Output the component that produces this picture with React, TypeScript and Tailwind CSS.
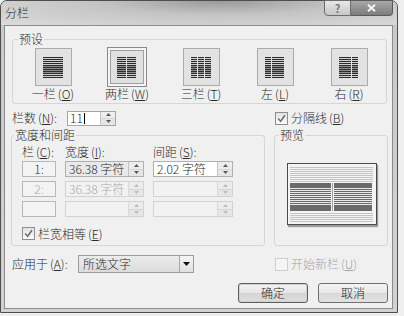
import React from "react";

const ink = "text-[#2a2a2a]";

function Key({ c }: { c: string }) {
  return (
    <span className="ml-[2px]">
      (<span className="underline underline-offset-[1px]">{c}</span>)
    </span>
  );
}

function Cols({ spans }: { spans: [number, number][] }) {
  const ys = Array.from({ length: 11 }, (_, i) => i * 2);
  return (
    <svg width="21" height="21" viewBox="0 0 21 21">
      {spans.map(([a, b]) => (
        <g key={a}>
          <rect x={a} y={9} width={b - a} height={8} fill="#9a9a9a" />
          {ys.map((y) => (
            <rect key={y} x={a} y={y} width={b - a} height={1.1} fill="#2c2c2c" />
          ))}
        </g>
      ))}
    </svg>
  );
}

function Preset({ label, k, spans, sel }: { label: string; k: string; spans: [number, number][]; sel?: boolean }) {
  return (
    <div className="flex w-[74px] flex-col items-center">
      <div className="flex h-[40px] w-[40px] items-center justify-center">
        {sel ? (
          <div className="flex h-[40px] w-[40px] items-center justify-center border border-[#8a8a8a] bg-[#f4f4f4]">
            <div className="flex h-[34px] w-[34px] items-center justify-center border border-[#a0a0a0] bg-[#e0e0e0]">
              <Cols spans={spans} />
            </div>
          </div>
        ) : (
          <div className="flex h-[38px] w-[37px] items-center justify-center border border-[#ababab] bg-[#e2e2e2]">
            <Cols spans={spans} />
          </div>
        )}
      </div>
      <div className={`mt-[1px] h-[12px] whitespace-nowrap leading-[12px] ${ink}`}>
        {label}
        <Key c={k} />
      </div>
    </div>
  );
}

function Spin({ dim }: { dim?: boolean }) {
  const f = dim ? "#bdbdbd" : "#5a5a5a";
  return (
    <div className={`flex h-full w-[15px] flex-col border-l ${dim ? "border-[#dadada]" : "border-[#c4c4c4]"}`}>
      <div className="flex flex-1 items-center justify-center border-b border-[#d6d6d6] bg-[#ededed]">
        <svg width="5" height="3" viewBox="0 0 5 3">
          <path d="M0 3L2.5 0L5 3Z" fill={f} />
        </svg>
      </div>
      <div className="flex flex-1 items-center justify-center bg-[#e6e6e6]">
        <svg width="5" height="3" viewBox="0 0 5 3">
          <path d="M0 0L2.5 3L5 0Z" fill={f} />
        </svg>
      </div>
    </div>
  );
}

function Check({ on, dim }: { on?: boolean; dim?: boolean }) {
  return (
    <span
      className={`flex h-[13px] w-[13px] shrink-0 items-center justify-center border ${
        dim ? "border-[#cfcfcf] bg-[#f5f5f5]" : "border-[#8e8e8e] bg-[linear-gradient(#e2e2e2,#fbfbfb)]"
      }`}
    >
      {on && (
        <svg width="9" height="9" viewBox="0 0 9 9">
          <path d="M1.2 4.6L3.6 7.2L8 1.2" fill="none" stroke="#6c6c6c" strokeWidth="1.5" />
        </svg>
      )}
    </span>
  );
}

function Group({ label, className, children, lx }: { label: string; className: string; children: React.ReactNode; lx: string }) {
  return (
    <div className={`relative rounded-[3px] border border-[#d6d6d6] ${className}`}>
      <span className={`absolute -top-[7px] h-[12px] bg-[#f0f0f0] px-[1px] leading-[12px] ${lx} ${ink}`}>{label}</span>
      {children}
    </div>
  );
}

function Preview() {
  const top = [3, 5, 7, 9, 11, 13, 15, 17];
  const bot = [49, 51, 53, 55, 57];
  const mid = [24, 26, 28, 30, 32, 34, 36, 38, 40];
  return (
    <svg width="88" height="60" viewBox="0 0 88 60">
      {top.map((y) => (
        <rect key={y} x={2} y={y} width={83} height={1} fill="#c4c4c4" />
      ))}
      <rect x={2} y={19} width={41} height={28} fill="#6a6a6a" />
      <rect x={46} y={19} width={38} height={28} fill="#6a6a6a" />
      {mid.map((y) => (
        <g key={y}>
          <rect x={2} y={y} width={41} height={1} fill="#e8e8e8" />
          <rect x={46} y={y} width={38} height={1} fill="#e8e8e8" />
        </g>
      ))}
      <rect x={44} y={19} width={1} height={28} fill="#a0a0a0" />
      {bot.map((y) => (
        <rect key={y} x={2} y={y} width={83} height={1} fill="#c4c4c4" />
      ))}
    </svg>
  );
}

export default function App() {
  return (
    <div className="h-[316px] w-[404px] overflow-hidden bg-[#efefef] font-['Noto_Sans_CJK_SC','Liberation_Sans',sans-serif] text-[12px] font-light">
      <div className="flex h-[313px] w-[398px] flex-col rounded-t-[7px] border border-[#4e4e4e] bg-[linear-gradient(#c9c9c9,#d2d2d2)]">
        {/* title bar */}
        <div className="flex h-[24px] items-start rounded-t-[6px] bg-[radial-gradient(ellipse_at_55%_0%,#9a9a9a_0%,#c4c4c4_40%,#dcdcdc_100%)]">
          <span className="mt-[6px] ml-[4px] leading-[12px] text-[#222]">分栏</span>
          <div className="ml-auto mr-[4px] flex h-[16px] -mt-px">
            <div className="flex w-[27px] items-center justify-center rounded-bl-[4px] border border-[#6c6c6c] bg-[linear-gradient(#e8e8e8,#c6c6c6)] text-[11px] font-bold leading-none text-[#7a7a7a]">
              ?
            </div>
            <div className="flex w-[42px] items-center justify-center rounded-br-[4px] border border-l-0 border-[#5a5a5a] bg-[linear-gradient(#a8a8a8,#7c7c7c)]">
              <svg width="9" height="8" viewBox="0 0 9 8">
                <path d="M1 0.8L8 7.2M8 0.8L1 7.2" stroke="#f4f4f4" strokeWidth="2" />
              </svg>
            </div>
          </div>
        </div>

        {/* client */}
        <div className={`ml-[3px] flex h-[284px] w-[389px] flex-col border border-[#8c8c8c] bg-[#f0f0f0] pl-[7px] ${ink}`}>
          <Group label="预设" lx="left-[5px]" className="mt-[13px] h-[65px] w-[375px]">
            <div className="flex pl-[3px] pt-[7px]">
              <Preset label="一栏" k="O" spans={[[0, 20]]} />
              <Preset label="两栏" k="W" spans={[[0, 9], [10, 19]]} sel />
              <Preset label="三栏" k="T" spans={[[0, 6], [7, 13], [14, 20]]} />
              <Preset label="左" k="L" spans={[[0, 6], [7, 19]]} />
              <Preset label="右" k="R" spans={[[0, 12], [13, 19]]} />
            </div>
          </Group>

          <div className="mt-[6px] flex h-[16px] items-center">
            <div className="flex w-[263px] items-center">
              <span className="w-[55px] leading-[12px]">
                栏数<Key c="N" />:
              </span>
              <div className="flex h-[15px] w-[49px] border border-[#a6a6a6] bg-white">
                <div className="flex flex-1 items-center pl-[2px] leading-[12px]">
                  11<span className="ml-[1px] h-[11px] w-px bg-black" />
                </div>
                <Spin />
              </div>
            </div>
            <Check on />
            <span className="ml-[3px] leading-[12px]">
              分隔线<Key c="B" />
            </span>
          </div>

          <div className="mt-[9px] flex">
            <Group label="宽度和间距" lx="left-[2px]" className="-ml-px h-[111px] w-[254px]">
              <div className="flex flex-col pl-[10px]">
                <div className="mt-[10px] flex h-[12px] leading-[12px]">
                  <span className="w-[43px]">
                    栏<Key c="C" />:
                  </span>
                  <span className="w-[88px]">
                    宽度<Key c="I" />:
                  </span>
                  <span>
                    间距<Key c="S" />:
                  </span>
                </div>
                <div className="mt-[3px] flex flex-col gap-[4px]">
                  {[0, 1, 2].map((r) => (
                    <div key={r} className="flex h-[16px] gap-[9px]">
                      <div className="flex w-[34px] items-center justify-center border border-[#b8b8b8] bg-[#f3f3f3] leading-[12px]">
                        <span className={r === 1 ? "text-[#a8a8a8]" : ""}>{r === 0 ? "1:" : r === 1 ? "2:" : ""}</span>
                      </div>
                      <div
                        className={`flex w-[79px] border ${
                          r === 0 ? "border-[#b0b0b0] bg-[#e9e9e9]" : "border-[#d2d2d2] bg-[#f2f2f2]"
                        }`}
                      >
                        <div className={`flex flex-1 items-center pl-[3px] leading-[12px] ${r === 1 ? "text-[#a8a8a8]" : ""}`}>
                          {r < 2 ? "36.38 字符" : ""}
                        </div>
                        <Spin dim={r > 0} />
                      </div>
                      <div
                        className={`flex w-[80px] border ${
                          r === 0 ? "border-[#b0b0b0] bg-white" : "border-[#d2d2d2] bg-[#f2f2f2]"
                        }`}
                      >
                        <div className="flex flex-1 items-center pl-[3px] leading-[12px]">{r === 0 ? "2.02 字符" : ""}</div>
                        <Spin dim={r > 0} />
                      </div>
                    </div>
                  ))}
                </div>
                <div className="mt-[10px] flex items-center">
                  <Check on />
                  <span className="ml-[3px] leading-[12px]">
                    栏宽相等<Key c="E" />
                  </span>
                </div>
              </div>
            </Group>
            <Group label="预览" lx="left-[4px]" className="ml-[9px] h-[111px] w-[114px]">
              <div className="ml-[12px] mt-[27px] h-[62px] w-[90px] border border-[#4a4a4a] bg-[#f4f4f4] shadow-[1px_2px_1px_rgba(0,0,0,0.35)]">
                <Preview />
              </div>
            </Group>
          </div>

          <div className="mt-[9px] flex h-[18px] items-center">
            <div className="flex w-[263px] items-center">
              <span className="w-[66px] leading-[12px]">
                应用于<Key c="A" />:
              </span>
              <div className="flex h-[18px] w-[116px] border border-[#9c9c9c] bg-[linear-gradient(#ececec,#dcdcdc)]">
                <div className="flex flex-1 items-center pl-[4px] leading-[12px]">所选文字</div>
                <div className="flex w-[14px] items-center justify-center border-l border-[#a8a8a8] bg-[linear-gradient(#f6f6f6,#e0e0e0)]">
                  <svg width="7" height="4" viewBox="0 0 7 4">
                    <path d="M0 0H7L3.5 4Z" fill="#111" />
                  </svg>
                </div>
              </div>
            </div>
            <Check dim />
            <span className="ml-[3px] leading-[12px] text-[#a4a4a4]">
              开始新栏<Key c="U" />
            </span>
          </div>

          <div className="mt-[10px] flex w-[376px] justify-end gap-[10px]">
            <button className="flex h-[20px] w-[70px] items-center justify-center rounded-[3px] border border-[#5f5f5f] bg-[linear-gradient(#f4f4f4_0%,#e6e6e6_50%,#d4d4d4_51%,#dedede_100%)] leading-[12px] shadow-[inset_0_0_0_1px_#cfcfcf]">
              确定
            </button>
            <button className="flex h-[20px] w-[70px] items-center justify-center rounded-[3px] border border-[#707070] bg-[linear-gradient(#f4f4f4_0%,#e8e8e8_50%,#d8d8d8_51%,#e2e2e2_100%)] leading-[12px]">
              取消
            </button>
          </div>
        </div>
      </div>
    </div>
  );
}
